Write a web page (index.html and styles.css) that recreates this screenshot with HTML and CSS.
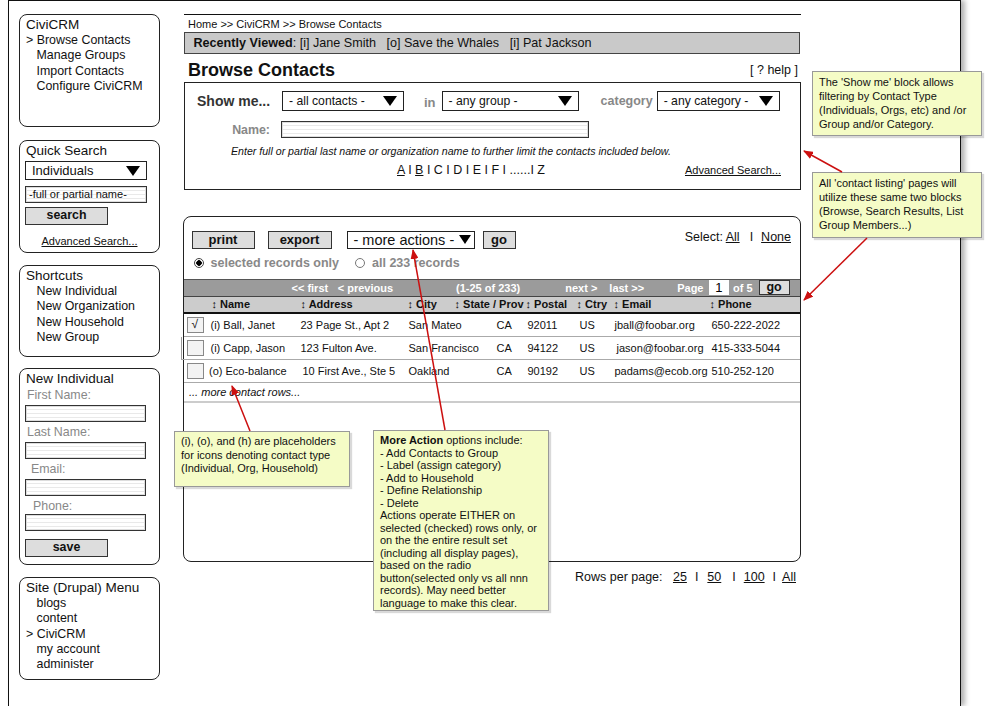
FILE: index.html
```html
<!DOCTYPE html>
<html lang="en">
<head>
    <meta charset="UTF-8" />
    <title>Browse Contacts | CiviCRM</title>
    <link rel="stylesheet" href="styles.css">
</head>
<body>
<div class="page">
    <aside class="sidebar">
        <div class="box nav-box">
            <div class="box-title">CiviCRM</div>
            <ul class="menu">
                <li class="current">&gt; Browse Contacts</li>
                <li>Manage Groups</li>
                <li>Import Contacts</li>
                <li>Configure CiviCRM</li>
            </ul>
        </div>

        <div class="box quick-box">
            <div class="box-title">Quick Search</div>
            <div class="select side-select"><span>Individuals</span><i class="caret"></i></div>
            <div class="field side-field">-full or partial name-</div>
            <div class="btn side-btn">search</div>
            <div class="side-link"><u>Advanced Search...</u></div>
        </div>

        <div class="box shortcuts-box">
            <div class="box-title">Shortcuts</div>
            <ul class="menu">
                <li>New Individual</li>
                <li>New Organization</li>
                <li>New Household</li>
                <li>New Group</li>
            </ul>
        </div>

        <div class="box new-box">
            <div class="box-title">New Individual</div>
            <div class="label">First Name:</div>
            <div class="field side-input"></div>
            <div class="label">Last Name:</div>
            <div class="field side-input"></div>
            <div class="label indent">Email:</div>
            <div class="field side-input"></div>
            <div class="label indent2">Phone:</div>
            <div class="field side-input"></div>
            <div class="btn side-btn save-btn">save</div>
        </div>

        <div class="box site-box">
            <div class="box-title">Site (Drupal) Menu</div>
            <ul class="menu">
                <li>blogs</li>
                <li>content</li>
                <li class="current">&gt; CiviCRM</li>
                <li>my account</li>
                <li>administer</li>
            </ul>
        </div>
    </aside>

    <main class="main">
        <div class="crumbs">Home &gt;&gt; CiviCRM &gt;&gt; Browse Contacts</div>
        <div class="recent">
            <b>Recently Viewed</b>: [i] Jane Smith&nbsp;&nbsp;&nbsp;[o] Save the Whales&nbsp;&nbsp;&nbsp;[i] Pat Jackson
        </div>

        <div class="title-row">
            <h1>Browse Contacts</h1>
            <span class="help">[ ? help ]</span>
        </div>

        <div class="show-box">
            <div class="show-row">
                <span class="show-label">Show me...</span>
                <div class="select sel-type"><span>- all contacts -</span><i class="caret"></i></div>
                <span class="soft in-label">in</span>
                <div class="select sel-group"><span>- any group -</span><i class="caret"></i></div>
                <span class="soft cat-label">category</span>
                <div class="select sel-cat"><span>- any category -</span><i class="caret"></i></div>
            </div>
            <div class="name-row">
                <span class="soft name-label">Name:</span>
                <div class="field name-input"></div>
            </div>
            <div class="hint">Enter full or partial last name or organization name to further limit the contacts included below.</div>
            <div class="alpha-row">
                <span class="alpha"><u>A</u> I <u>B</u> I C I D I E I F I ......I Z</span>
                <u class="adv">Advanced Search...</u>
            </div>
        </div>

        <div class="results">
            <div class="results-top">
                <div class="action-row">
                    <div class="btn btn-print">print</div>
                    <div class="btn btn-export">export</div>
                    <div class="select sel-actions"><span>- more actions -</span><i class="caret"></i></div>
                    <div class="btn btn-go">go</div>
                    <div class="select-links">Select: <u>All</u><span class="sep">I</span><u>None</u></div>
                </div>
                <div class="radio-row">
                    <i class="radio on"></i><span>selected records only</span>
                    <i class="radio"></i><span>all 233 records</span>
                </div>
            </div>

            <div class="pager">
                <span class="p-first">&lt;&lt; first</span>
                <span class="p-prev">&lt; previous</span>
                <span class="p-count">(1-25 of 233)</span>
                <span class="p-next">next &gt;</span>
                <span class="p-last">last &gt;&gt;</span>
                <span class="p-page">Page</span>
                <span class="p-input">1</span>
                <span class="p-of">of 5</span>
                <span class="p-go">go</span>
            </div>

            <div class="thead">
                <span></span>
                <span>↕ Name</span>
                <span>↕ Address</span>
                <span>↕ City</span>
                <span>↕ State / Prov</span>
                <span>↕ Postal</span>
                <span>↕ Ctry</span>
                <span>↕ Email</span>
                <span>↕ Phone</span>
            </div>
            <div class="trow">
                <span><i class="check">√</i></span>
                <span>(i) Ball, Janet</span>
                <span>23 Page St., Apt 2</span>
                <span>San Mateo</span>
                <span>CA</span>
                <span>92011</span>
                <span>US</span>
                <span>jball@foobar.org</span>
                <span>650-222-2022</span>
            </div>
            <div class="trow outlined">
                <span><i class="check"></i></span>
                <span>(i) Capp, Jason</span>
                <span>123 Fulton Ave.</span>
                <span>San Francisco</span>
                <span>CA</span>
                <span>94122</span>
                <span>US</span>
                <span class="shift">jason@foobar.org</span>
                <span>415-333-5044</span>
            </div>
            <div class="trow">
                <span><i class="check"></i></span>
                <span class="pull">(o) Eco-balance</span>
                <span class="shift">10 First Ave., Ste 5</span>
                <span>Oakland</span>
                <span>CA</span>
                <span>90192</span>
                <span>US</span>
                <span>padams@ecob.org</span>
                <span>510-252-120</span>
            </div>
            <div class="more-row">... more contact rows...</div>
        </div>

        <div class="rows-per-page">
            Rows per page:&nbsp;&nbsp; <u>25</u><span class="sep">I</span><u>50</u><span class="sep wide">I</span><u>100</u><span class="sep last">I</span><u>All</u>
        </div>
    </main>
</div>

<div class="note note-show">The 'Show me' block allows<br>filtering by Contact Type<br>(Individuals, Orgs, etc) and /or<br>Group and/or Category.</div>
<div class="note note-listing">All 'contact listing' pages will<br>utilize these same two blocks<br>(Browse, Search Results, List<br>Group Members...)</div>
<div class="note note-icons">(i), (o), and (h) are placeholders<br>for icons denoting contact type<br>(Individual, Org, Household)</div>
<div class="note note-actions"><b>More Action</b> options include:<br>- Add Contacts to Group<br>- Label (assign category)<br>- Add to Household<br>- Define Relationship<br>- Delete<br>Actions operate EITHER on<br>selected (checked) rows only, or<br>on the the entire result set<br>(including all display pages),<br>based on the radio<br>button(selected only vs all nnn<br>records). May need better<br>language to make this clear.</div>

<svg class="arrows" width="987" height="706" viewBox="0 0 987 706">
    <defs>
        <marker id="head" markerWidth="10" markerHeight="8" refX="9" refY="4" orient="auto" markerUnits="userSpaceOnUse">
            <path d="M0,0 L10,4 L0,8 Z" fill="#cc1010"/>
        </marker>
    </defs>
    <line x1="842" y1="172" x2="804" y2="151" stroke="#cc1010" stroke-width="1.5" marker-end="url(#head)"/>
    <line x1="867" y1="238" x2="804" y2="300" stroke="#cc1010" stroke-width="1.5" marker-end="url(#head)"/>
    <line x1="250" y1="431" x2="232" y2="386" stroke="#cc1010" stroke-width="1.5" marker-end="url(#head)"/>
    <line x1="445" y1="430" x2="413" y2="250" stroke="#cc1010" stroke-width="1.5" marker-end="url(#head)"/>
</svg>
</body>
</html>
```

FILE: styles.css
```css
* {
    margin: 0;
    padding: 0;
    box-sizing: border-box;
}

html, body {
    overflow: hidden;
}

body {
    font-family: "Liberation Sans", Arial, sans-serif;
    color: #111;
    background-color: #fff;
}

ul {
    list-style: none;
}

i {
    font-style: normal;
}

.page {
    margin-left: 8px;
    width: 953px;
    height: 706px;
    border: 1px solid #111;
    border-bottom: none;
    box-shadow: 4px 0 5px rgba(0, 0, 0, 0.3);
    display: flex;
    gap: 24px;
    padding: 13px 0 0 10px;
}

/* left column */

.sidebar {
    width: 141px;
    display: flex;
    flex-direction: column;
    gap: 12px;
}

.box {
    border: 1.5px solid #222;
    border-radius: 8px;
    padding: 1px 5px;
    font-size: 12.4px;
    line-height: 15.3px;
}

.box-title {
    font-size: 13.5px;
    line-height: 17px;
    padding-left: 1px;
}

.menu li {
    padding-left: 11.5px;
}

.menu li.current {
    padding-left: 1px;
}

.nav-box { height: 113px; margin-bottom: 1px; }
.quick-box { height: 113px; }
.shortcuts-box { height: 92px; margin-bottom: -1px; padding-top: 1px; }
.new-box { height: 197px; }
.site-box { height: 103px; }

.select {
    display: flex;
    align-items: center;
    justify-content: space-between;
    border: 1.5px solid #222;
    background-color: #fff;
    padding: 0 6px 0 6px;
    font-size: 12.2px;
}

.caret {
    width: 0;
    height: 0;
    border-left: 7px solid transparent;
    border-right: 7px solid transparent;
    border-top: 10px solid #000;
}

.field {
    border: 1px solid #333;
    box-shadow: inset 0 0 0 1px #ddd;
    background: repeating-linear-gradient(to bottom, #fff 0, #fff 3px, #e9e9e9 3px, #e9e9e9 4px);
}

.btn {
    background-color: #ddd;
    border: 1.5px solid #333;
    font-weight: bold;
    text-align: center;
    color: #111;
}

.side-select {
    margin-top: 2px;
    width: 122px;
    height: 19px;
    font-size: 13px;
}

.side-field {
    margin-top: 6px;
    width: 122px;
    height: 17px;
    font-size: 11px;
    line-height: 15px;
    padding-left: 3px;
}

.side-btn {
    margin-top: 4px;
    width: 83px;
    height: 18px;
    font-size: 12.4px;
    line-height: 15px;
}

.side-link {
    margin-top: 9px;
    font-size: 11px;
    text-align: center;
}

.label {
    color: #888;
    line-height: 15px;
    margin-top: 1px;
    padding-left: 2px;
}

.side-input + .label {
    margin-top: 3px;
}

.label.indent { padding-left: 6px; }
.label.indent2 { padding-left: 8px; }

.side-input {
    margin-top: 2px;
    width: 121px;
    height: 17px;
}

.label.indent2 + .side-input {
    margin-top: 0;
}

.save-btn {
    margin-top: 8px;
}

/* main column */

.main {
    width: 617px;
    display: flex;
    flex-direction: column;
}

.crumbs {
    border-top: 1px solid #111;
    font-size: 11px;
    line-height: 13px;
    padding: 3px 0 0 4px;
}

.recent {
    margin-top: 1px;
    width: 616px;
    height: 22px;
    border: 1.5px solid #444;
    background-color: #c9c9c9;
    font-size: 12.6px;
    line-height: 20px;
    padding-left: 8.5px;
}

.title-row {
    display: flex;
    justify-content: space-between;
    align-items: center;
    margin-top: 5px;
    height: 22px;
    width: 614px;
}

h1 {
    font-size: 18px;
    padding-left: 4px;
}

.help {
    font-size: 12.5px;
}

.show-box {
    margin-top: 1px;
    width: 617px;
    height: 108px;
    border: 1px solid #222;
}

.show-row {
    display: flex;
    align-items: center;
    margin-top: 8px;
    height: 20px;
    padding-left: 12px;
}

.show-label {
    width: 85px;
    font-size: 14px;
    font-weight: bold;
    color: #333;
}

.show-row .select {
    height: 20px;
}

.sel-type { width: 122px; }
.sel-group { width: 137px; }
.sel-cat { width: 123px; }

.soft {
    color: #888;
    font-weight: bold;
    font-size: 12.5px;
}

.in-label {
    margin: 3px 6px 0 20px;
    font-size: 13px;
}

.cat-label {
    margin: 0 4px 0 22px;
}

.name-row {
    display: flex;
    align-items: center;
    margin-top: 10px;
    height: 17px;
}

.name-label {
    width: 85px;
    text-align: right;
    font-size: 12.4px;
}

.name-input {
    margin-left: 11px;
    width: 308px;
    height: 17px;
}

.hint {
    margin-top: 6px;
    line-height: 14px;
    font-size: 10.6px;
    font-style: italic;
    padding-left: 46px;
}

.alpha-row {
    display: flex;
    margin-top: 4px;
    line-height: 16px;
}

.alpha {
    margin-left: 212px;
    font-size: 12.5px;
}

.adv {
    margin-left: auto;
    margin-right: 19px;
    font-size: 11px;
}

/* results block */

.results {
    margin-top: 26px;
    width: 618px;
    margin-left: -1px;
    height: 346px;
    border: 1.5px solid #222;
    border-radius: 8px;
}

.results-top {
    height: 61.5px;
    padding: 13.5px 9px 0 7.5px;
}

.action-row {
    display: flex;
    align-items: center;
    height: 18px;
}

.btn-print {
    width: 63px;
    height: 18px;
    font-size: 13px;
    line-height: 15px;
}

.btn-export {
    margin-left: 13px;
    width: 64px;
    height: 18px;
    font-size: 13px;
    line-height: 15px;
}

.sel-actions {
    margin-left: 15px;
    width: 128px;
    height: 18px;
    font-size: 14.5px;
    padding-right: 3px;
}

.sel-actions .caret {
    border-left-width: 6px;
    border-right-width: 6px;
    border-top-width: 9px;
}

.btn-go {
    margin-left: 8px;
    width: 33px;
    height: 18px;
    font-size: 13px;
    line-height: 15px;
}

.select-links {
    margin-left: auto;
    margin-top: -5px;
    font-size: 12.5px;
}

.sep {
    margin: 0 8px 0 10px;
}

.radio-row {
    display: flex;
    align-items: center;
    margin-top: 6px;
    height: 16px;
    font-size: 12.5px;
    font-weight: bold;
    color: #888;
}

.radio {
    width: 10px;
    height: 10px;
    border-radius: 50%;
    border: 1px solid #777;
    background-color: #fff;
    margin: 0 7px 0 2px;
}

.radio.on {
    background: radial-gradient(circle, #000 0, #000 2.5px, #fff 3px);
    border-color: #444;
}

.radio-row .radio + span + .radio {
    margin-left: 16px;
}

.pager {
    display: flex;
    align-items: center;
    height: 18px;
    border-top: 1px solid #555;
    border-bottom: 1px solid #444;
    background-color: #9b9b9b;
    color: #fff;
    font-size: 11px;
    font-weight: bold;
}

.p-first { margin-left: 107.5px; }
.p-prev { margin-left: 9.5px; }
.p-count { margin-left: 63px; }
.p-next { margin-left: 45px; }
.p-last { margin-left: 12px; }
.p-page { margin-left: 33px; }

.p-input {
    margin-left: 5.5px;
    width: 20px;
    height: 15px;
    background-color: #fff;
    color: #000;
    font-weight: normal;
    font-size: 13px;
    line-height: 15px;
    text-align: center;
}

.p-of { margin-left: 4px; }

.p-go {
    margin-left: 6px;
    width: 31px;
    height: 15px;
    background-color: #ddd;
    border: 1px solid #333;
    color: #111;
    font-size: 12.5px;
    line-height: 13px;
    text-align: center;
}

.thead,
.trow {
    display: grid;
    align-items: center;
    font-size: 11px;
}

.thead {
    grid-template-columns: 26px 89px 107px 47px 71px 51px 37px 96px 1fr;
    height: 17px;
    background-color: #ccc;
    border-bottom: 2px solid #111;
    font-weight: bold;
}

.thead span {
    padding-left: 1.5px;
}

.trow {
    grid-template-columns: 25px 90px 108px 88px 31px 52px 35px 97px 1fr;
    height: 23px;
    border-bottom: 1px solid #aaa;
}

.trow.outlined {
    margin-left: -3px;
    padding-left: 2px;
    border-left: 1px solid #999;
}

.trow span {
    padding-left: 1.5px;
}

.trow span.shift { padding-left: 3.5px; }
.trow span.pull { padding-left: 0; }

.check {
    display: block;
    width: 17px;
    height: 16px;
    margin-left: 1px;
    border: 1px solid #888;
    background-color: #f3f3f3;
    font-size: 12px;
    line-height: 13px;
    padding-left: 4px;
}

.more-row {
    height: 20px;
    border-bottom: 2px solid #ccc;
    font-size: 11px;
    font-style: italic;
    line-height: 19px;
    padding-left: 5px;
}

.rows-per-page {
    margin-top: 8px;
    text-align: right;
    padding-right: 5px;
    font-size: 12.5px;
}

.rows-per-page .sep {
    margin: 0 9px 0 8px;
}

.rows-per-page .sep.wide {
    margin: 0 8px 0 11px;
}

.rows-per-page .sep.last {
    margin: 0 6px 0 8px;
}

/* sticky notes */

.note {
    position: absolute;
    background-color: #f5fcc6;
    border: 1px solid #999;
    box-shadow: 2px 2px 1px rgba(0, 0, 0, 0.15);
    font-size: 11px;
    line-height: 14px;
    padding: 3px 5px 3px 6px;
    color: #111;
    white-space: nowrap;
}

.note-show {
    left: 812px;
    top: 71px;
    width: 170px;
    height: 65px;
}

.note-listing {
    left: 812px;
    top: 172px;
    width: 170px;
    height: 66px;
}

.note-icons {
    left: 174px;
    top: 431px;
    width: 176px;
    height: 56px;
    line-height: 13.5px;
}

.note-actions {
    left: 373px;
    top: 430px;
    width: 176px;
    height: 181px;
    line-height: 12.5px;
}

.arrows {
    position: absolute;
    top: 0;
    left: 0;
    pointer-events: none;
}
```
